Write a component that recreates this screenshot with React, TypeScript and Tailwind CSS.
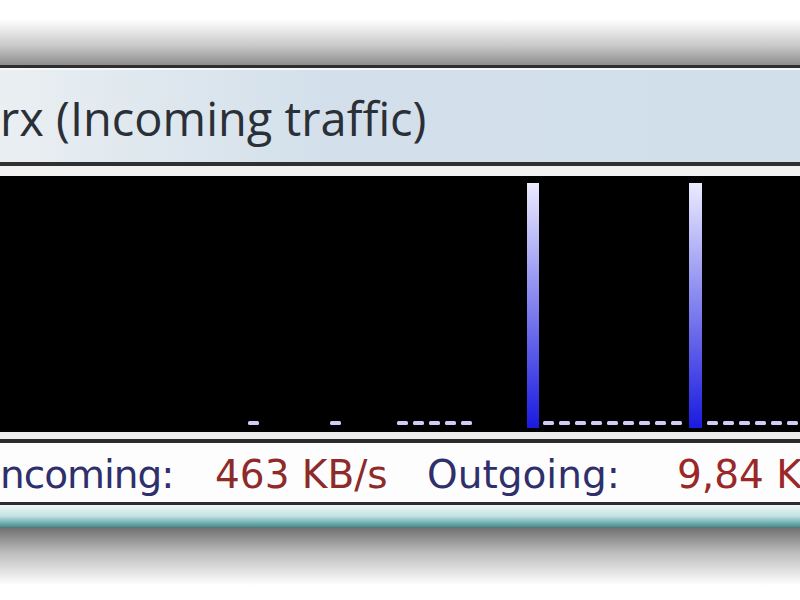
const DASHES = [
  248, 330, 397, 413, 429, 445, 461, 543, 559, 575, 591, 607, 623, 639, 655, 671, 707, 723, 739, 755,
  771, 787,
];
const BARS = [
  { x: 527, w: 12 },
  { x: 689, w: 13 },
];

function TrafficGraph() {
  return (
    <svg width="800" height="256" viewBox="0 0 800 256" className="block">
      <defs>
        <linearGradient id="bar" x1="0" y1="0" x2="0" y2="1">
          <stop offset="0" stopColor="#ecebff" />
          <stop offset="0.45" stopColor="#8c8cf0" />
          <stop offset="1" stopColor="#1a1ae0" />
        </linearGradient>
      </defs>
      <rect width="800" height="256" fill="#000" />
      {BARS.map((bar) => (
        <rect key={bar.x} x={bar.x} y={7} width={bar.w} height={245} fill="url(#bar)" />
      ))}
      {DASHES.map((x) => (
        <rect key={x} x={x} y={245} width={11} height={4} rx={1.5} fill="#cfcdf4" />
      ))}
    </svg>
  );
}

export default function App() {
  return (
    <div className="flex h-[600px] w-[800px] flex-col overflow-hidden bg-white">
      <div className="h-[65px] bg-[linear-gradient(to_bottom,#ffffff_0%,#ffffff_30%,#c9c9c9_70%,#8e8e8e_100%)]" />
      <div className="h-[3px] bg-[#2e2e2e]" />
      <div className="flex h-[94px] items-center border-t-2 border-[#f6f8fa] bg-[linear-gradient(to_right,#eaeff2,#d3e0eb_40%,#d1dfea)] whitespace-nowrap">
        <span className="pt-[4px] font-['Open_Sans',sans-serif] text-[47px] leading-none text-[#2b2f36]">
          rx (Incoming traffic)
        </span>
      </div>
      <div className="h-[4px] bg-[#303030]" />
      <div className="h-[10px] bg-[#f2f2f2]" />
      <TrafficGraph />
      <div className="h-[7px] bg-[#ececec]" />
      <div className="h-[4px] bg-[#2c2c2c]" />
      <div className="flex h-[59px] items-center bg-[#fdfdfd] pt-[4px] font-['DejaVu_Sans',sans-serif] text-[39px] leading-none whitespace-nowrap">
        <span className="w-[215px] shrink-0 tracking-[-1px] text-[#2f2f6b]">ncoming:</span>
        <span className="w-[212px] shrink-0 text-[#8e2a2a]">463 KB/s</span>
        <span className="w-[250px] shrink-0 text-[#2f2f6b]">Outgoing:</span>
        <span className="shrink-0 text-[#9a2828]">9,84 KB/s</span>
      </div>
      <div className="h-[3px] bg-[#2c2c2c]" />
      <div className="h-[22px] bg-[linear-gradient(to_bottom,#eef6f6,#c4e2e2_50%,#3e9292)]" />
      <div className="flex-1 bg-[linear-gradient(to_bottom,#6e6e6e,#bcbcbc_35%,#ffffff_80%)]" />
    </div>
  );
}
